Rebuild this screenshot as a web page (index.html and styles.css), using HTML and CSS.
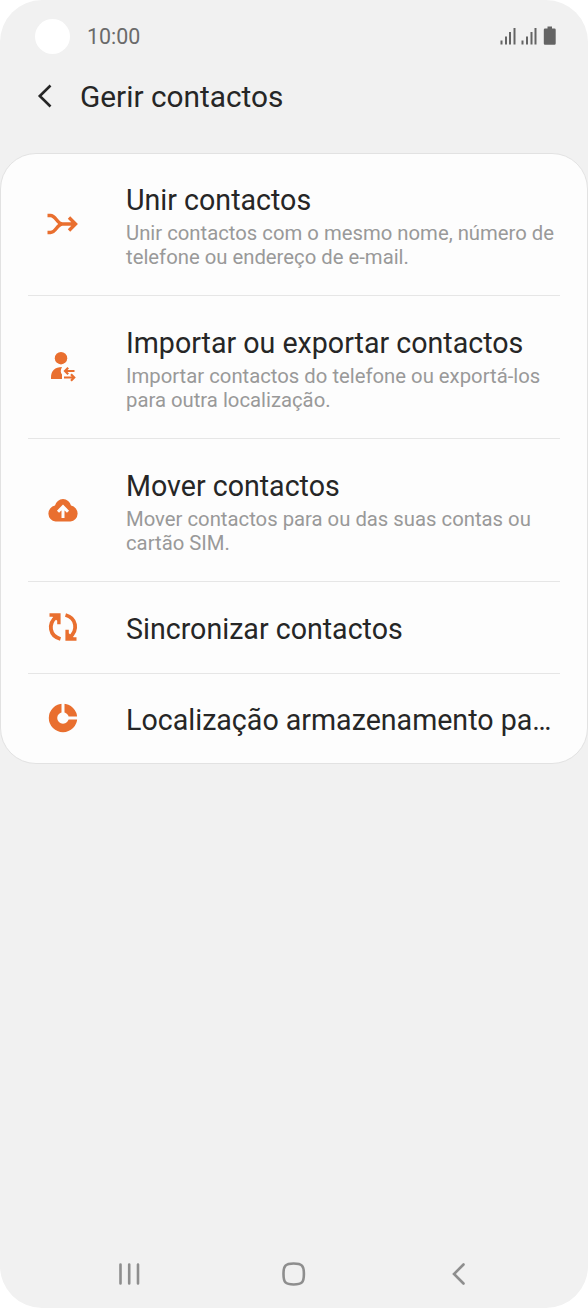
FILE: index.html
```html
<!DOCTYPE html>
<html lang="pt">
<head>
  <meta charset="UTF-8">
  <meta name="viewport" content="width=device-width, initial-scale=1.0">
  <title>Gerir contactos</title>
  <link rel="stylesheet" href="styles.css">
</head>
<body>
  <div class="screen">
    <div class="status-bar">
      <span class="camera"></span>
      <span class="time">10:00</span>
      <svg class="status-icons" width="58" height="22" viewBox="0 0 58 22">
        <path d="M1.500 15.500v4M6 11.500v8M10 7v12.500M14.500 3v16.500M22.500 15.500v4M27 11.500v8M31.500 7v12.500M35.500 3v16.500"/>
        <path class="battery" d="M47.500 1.500h4.500v2h2.500q1.200 0 1.200 1.200v13.800q0 1.200-1.200 1.200h-9.500q-1.200 0-1.200-1.200v-13.800q0-1.200 1.200-1.200h2.500z"/>
      </svg>
    </div>

    <div class="header">
      <a href="#" class="back-btn">
        <svg width="16" height="26" viewBox="0 0 16 26"><path d="M14.500 1.500L3.800 12l10.700 10.500"/></svg>
      </a>
      <h1 class="title">Gerir contactos</h1>
    </div>

    <div class="card">
      <a href="#" class="item">
        <svg class="icon" viewBox="0 0 40 40">
          <path class="line" d="M4.500 11.500h3c5.500 0 6.500 8.500 12 8.500M4.500 28.500h3c5.500 0 6.500-8.500 12-8.500M17 20h15.500M26 13.500l6.500 6.500-6.500 6.500"/>
        </svg>
        <div class="text">
          <div class="name">Unir contactos</div>
          <p class="desc">Unir contactos com o mesmo nome, número de telefone ou endereço de e-mail.</p>
        </div>
      </a>
      <a href="#" class="item">
        <svg class="icon" viewBox="0 0 40 40">
          <circle cx="18" cy="12.200" r="6.200"/>
          <path d="M8 33v-1.500c0-6.500 4-10.500 11-10.500-1.800 3.500-1.500 5.500 0 7.500v4.500z"/>
          <path class="thin" d="M31.500 25h-9M25.200 21.800L22 25l3.200 3.200M21 31.500h9.500M28 28.300l3.200 3.200-3.200 3.200"/>
        </svg>
        <div class="text">
          <div class="name">Importar ou exportar contactos</div>
          <p class="desc">Importar contactos do telefone ou exportá-los para outra localização.</p>
        </div>
      </a>
      <a href="#" class="item">
        <svg class="icon" viewBox="0 0 40 40">
          <path d="M12.500 32.500a8.100 8.100 0 0 1-.5-16 8.200 8.200 0 0 1 16 0 8.100 8.100 0 0 1-.5 16z"/>
          <path class="cutout" d="M20 29V18M15 22.700l5-5 5 5"/>
        </svg>
        <div class="text">
          <div class="name">Mover contactos</div>
          <p class="desc">Mover contactos para ou das suas contas ou cartão SIM.</p>
        </div>
      </a>
      <a href="#" class="item item-single">
        <svg class="icon" viewBox="0 0 40 40">
          <path class="arc" d="M17.500 32C6.500 29 4.500 17 13.500 9.500M22.500 8C33.500 11 35.500 23 26.500 30.500"/>
          <path d="M6.500 6.200h11.100v11h-3.400v-3.500L9.500 9.700h-3zM33.500 33.800H22.400v-11h3.400v3.500l4.700 4h3z"/>
        </svg>
        <div class="name">Sincronizar contactos</div>
      </a>
      <a href="#" class="item item-single">
        <svg class="icon" viewBox="0 0 40 40">
          <circle class="ring" cx="20" cy="20" r="10"/>
          <path class="gap" d="M20 5v10M25 20h10"/>
        </svg>
        <div class="name">Localização armazenamento pa…</div>
      </a>
    </div>

    <div class="nav-bar">
      <svg width="26" height="26" viewBox="0 0 26 26"><path d="M5.500 3.500v19M14.200 3.500v19M23 3.500v19"/></svg>
      <svg width="26" height="26" viewBox="0 0 26 26"><path d="M12.700 2.500c8.300 0 10.200 2 10.200 10.500s-1.900 10.500-10.200 10.500-10.200-2-10.200-10.500 1.900-10.500 10.200-10.500z"/></svg>
      <svg width="26" height="26" viewBox="0 0 26 26"><path d="M17.500 3.500L8 13l9.500 9.500"/></svg>
    </div>
  </div>
</body>
</html>
```
FILE: styles.css
```css
* {
  margin: 0;
  padding: 0;
  box-sizing: border-box;
}

body {
  background-color: #fff;
  font-family: Roboto, "Liberation Sans", sans-serif;
  color: #262626;
}

a {
  color: inherit;
  text-decoration: none;
}

svg {
  display: block;
  flex-shrink: 0;
}

.screen {
  display: flex;
  flex-direction: column;
  height: 1308px;
  background-color: #f1f1f1;
  border-radius: 42px;
  overflow: hidden;
}

.status-bar {
  display: flex;
  align-items: center;
  height: 72px;
  padding: 0 30px 0 35px;
}

.camera {
  width: 35px;
  height: 35px;
  margin-right: 17px;
  border-radius: 50%;
  background-color: #fff;
}

.time {
  font-size: 21.4px;
  color: #6a6a6a;
}

.status-icons {
  margin-left: auto;
  fill: none;
  stroke: #646464;
  stroke-width: 2;
}

.battery {
  fill: #646464;
  stroke: none;
}

.header {
  display: flex;
  align-items: center;
  height: 49px;
  padding-left: 36px;
  margin-bottom: 32px;
}

.back-btn svg {
  fill: none;
  stroke: #262626;
  stroke-width: 2.6;
}

.title {
  margin-left: 28px;
  font-size: 29.8px;
  font-weight: 400;
}

.card {
  background-color: #fdfdfd;
  border: 1px solid #e2e2e2;
  border-radius: 36px;
  padding: 0 27px;
}

.item {
  display: flex;
  align-items: center;
  height: 143px;
  padding-left: 15px;
  border-bottom: 1px solid #e6e6e6;
}

.item:first-child {
  height: 142px;
}

.item-single {
  height: 92px;
}

.item:last-child {
  height: 89px;
  border-bottom: none;
}

.icon {
  width: 40px;
  height: 40px;
  margin: 0 43px 2px 0;
  fill: #e96f2f;
}

.line,
.thin,
.arc,
.ring,
.cutout,
.gap {
  fill: none;
  stroke: #e96f2f;
  stroke-width: 3.4;
}

.thin {
  stroke-width: 2.2;
}

.arc {
  stroke-width: 3.8;
}

.cutout {
  stroke: #fdfdfd;
  stroke-width: 3;
}

.ring {
  stroke-width: 8.4;
}

.gap {
  stroke: #fdfdfd;
  stroke-width: 3;
}

.text {
  min-width: 0;
}

.item + .item .text {
  padding-top: 2px;
}

.name {
  font-size: 28.6px;
  line-height: 36px;
  padding-top: 1px;
  white-space: nowrap;
}

.item-single .name {
  padding-top: 2px;
}

.desc {
  font-size: 20.3px;
  line-height: 24px;
  margin-top: 3px;
  color: #999;
}

.nav-bar {
  display: flex;
  justify-content: space-between;
  margin-top: auto;
  padding: 0 116px 21px 115px;
}

.nav-bar svg {
  fill: none;
  stroke: #8e8e8e;
  stroke-width: 2.6;
  stroke-linecap: round;
}
```
